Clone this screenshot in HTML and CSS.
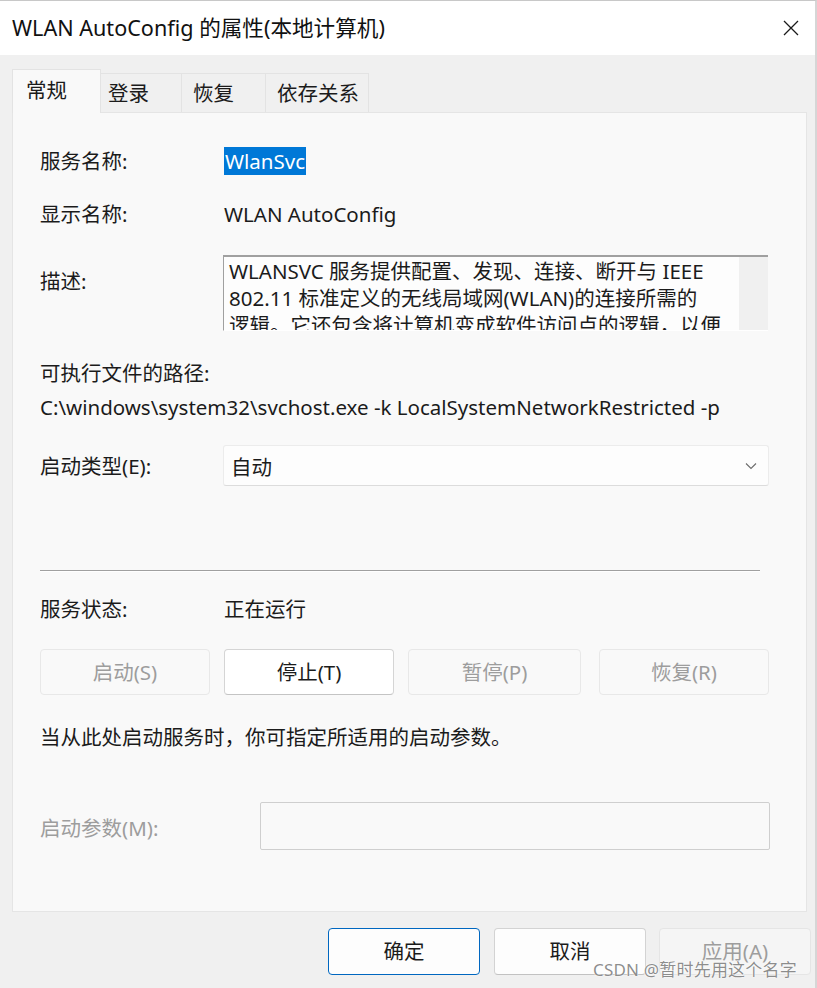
FILE: index.html
```html
<!DOCTYPE html>
<html lang="zh-CN">
<head>
<meta charset="utf-8">
<title>WLAN AutoConfig 的属性(本地计算机)</title>
<link rel="stylesheet" href="styles.css">
</head>
<body>
<div class="window">
  <div class="titlebar">
    <span class="title">WLAN AutoConfig 的属性(本地计算机)</span>
    <svg class="close" width="16" height="16" viewBox="0 0 16 16"><path d="M1 1 L15 15 M15 1 L1 15" stroke="#1a1a1a" stroke-width="1.3" fill="none"/></svg>
  </div>
  <div class="content">
    <div class="tabs">
      <div class="tab active">常规</div>
      <div class="tab t2">登录</div>
      <div class="tab t3">恢复</div>
      <div class="tab t4">依存关系</div>
    </div>
    <div class="panel">
      <div class="row r-name">
        <span class="label">服务名称:</span>
        <span class="value"><span class="selected">WlanSvc</span></span>
      </div>
      <div class="row r-display">
        <span class="label">显示名称:</span>
        <span class="value">WLAN AutoConfig</span>
      </div>
      <div class="row r-desc">
        <span class="label desc-label">描述:</span>
        <div class="descbox">
          <div class="desctext">WLANSVC 服务提供配置、发现、连接、断开与 IEEE<br>802.11 标准定义的无线局域网(WLAN)的连接所需的<br>逻辑。它还包含将计算机变成软件访问点的逻辑，以便</div>
          <div class="scrollbar"></div>
        </div>
      </div>
      <div class="line r-pathlabel">可执行文件的路径:</div>
      <div class="line r-path">C:\windows\system32\svchost.exe -k LocalSystemNetworkRestricted -p</div>
      <div class="row r-type">
        <span class="label">启动类型(E):</span>
        <div class="select">
          <span>自动</span>
          <svg class="chev" width="12" height="8" viewBox="0 0 12 8"><path d="M1 1.5 L6 6.5 L11 1.5" stroke="#6b6b6b" stroke-width="1.1" fill="none"/></svg>
        </div>
      </div>
      <div class="separator"></div>
      <div class="row r-status">
        <span class="label">服务状态:</span>
        <span class="value">正在运行</span>
      </div>
      <div class="btnrow">
        <div class="btn disabled b1">启动(S)</div>
        <div class="btn b2">停止(T)</div>
        <div class="btn disabled b3">暂停(P)</div>
        <div class="btn disabled b4">恢复(R)</div>
      </div>
      <div class="line r-hint">当从此处启动服务时，你可指定所适用的启动参数。</div>
      <div class="row r-param">
        <span class="label param-label">启动参数(M):</span>
        <div class="paraminput"></div>
      </div>
    </div>
    <div class="footer">
      <div class="fbtn default">确定</div>
      <div class="fbtn">取消</div>
      <div class="fbtn disabled">应用(A)</div>
    </div>
  </div>
  <div class="watermark">CSDN @暂时先用这个名字</div>
</div>
</body>
</html>
```
FILE: styles.css
```css
* { box-sizing: border-box; }
html, body { margin: 0; padding: 0; }
body {
  width: 817px;
  height: 988px;
  overflow: hidden;
  background: #f0f0f0;
  font-family: "Noto Sans", "Noto Sans CJK SC", sans-serif;
  font-size: 20.5px;
  color: #1b1b1b;
}
.window {
  position: relative;
  width: 817px;
  height: 988px;
  background: #f0f0f0;
  border-top: 1px solid #c8c8c8;
  border-right: 2px solid #d6d6d6;
}
.titlebar {
  height: 54px;
  background: #ffffff;
  display: flex;
  align-items: center;
  justify-content: space-between;
  padding: 0 16px 0 12px;
}
.title { font-size: 21.6px; line-height: 28px; color: #111; }
.close { display: block; }
.content { padding: 14px 0 0 12px; }
.tabs {
  display: flex;
  align-items: flex-end;
  height: 43px;
  position: relative;
  z-index: 1;
}
.tab {
  height: 39px;
  line-height: 38px;
  padding-left: 13px;
  background: #f0f0f0;
  border: 1px solid #e3e3e3;
  border-bottom: none;
  border-left: none;
}
.tab.active {
  width: 89px;
  height: 44px;
  line-height: 40px;
  background: #f9f9f9;
  border-left: 1px solid #e3e3e3;
  margin-bottom: -1px;
}
.t2 { width: 81px; padding-left: 7px; }
.t3 { width: 84px; padding-left: 11px; }
.t4 { width: 103px; padding-left: 11px; }
.panel {
  width: 795px;
  height: 800px;
  background: #f9f9f9;
  border: 1px solid #e5e5e5;
  padding: 34px 0 0 27px;
  display: flex;
  flex-direction: column;
}
.row { display: flex; align-items: center; }
.label { width: 184px; flex: none; line-height: 28px; }
.value { line-height: 28px; }
.line { line-height: 28px; }
.selected { background: #0078d7; color: #fff; padding: 0 1px; display: inline-block; line-height: 28px; }
.r-name { height: 28px; }
.r-display { height: 28px; margin-top: 25px; }
.r-desc { align-items: flex-start; margin-top: 27px; }
.desc-label { margin-top: 12px; }
.descbox {
  width: 545px;
  height: 76px;
  display: flex;
  background: #fff;
  border-top: 2px solid #a0a0a0;
  border-left: 1px solid #a0a0a0;
  border-bottom: 1px solid #ffffff;
  overflow: hidden;
  margin-left: -1px;
}
.desctext {
  width: 515px;
  flex: none;
  padding: 1px 0 0 5px;
  line-height: 27px;
  white-space: nowrap;
  background: #fdfdfd;
  overflow: hidden;
  height: 73px;
}
.scrollbar { flex: 1; background: #f0f0f0; }
.r-pathlabel { margin-top: 28px; }
.r-path { margin-top: 6px; }
.r-type { margin-top: 24px; }
.select {
  width: 546px;
  height: 41px;
  background: #fdfdfd;
  border: 1px solid #ececec;
  border-bottom-color: #dcdcdc;
  border-radius: 3px;
  display: flex;
  align-items: center;
  justify-content: space-between;
  padding: 0 11px 0 7px;
  margin-left: -1px;
}
.chev { display: block; }
.separator {
  width: 720px;
  height: 2px;
  margin-top: 84px;
  border-top: 1px solid #a0a0a0;
  border-bottom: 1px solid #ffffff;
}
.r-status { margin-top: 23px; }
.btnrow { display: flex; margin-top: 26px; }
.btn {
  height: 46px;
  line-height: 44px;
  text-align: center;
  background: #ffffff;
  border: 1px solid #d5d5d5;
  border-bottom-color: #c4c4c4;
  border-radius: 4px;
}
.btn.disabled {
  background: #f9f9f9;
  border: 1px solid #e8e8e8;
  color: #9d9d9d;
}
.b1 { width: 170px; }
.b2 { width: 170px; margin-left: 14px; }
.b3 { width: 173px; margin-left: 14px; }
.b4 { width: 170px; margin-left: 18px; }
.r-hint { margin-top: 28px; }
.r-param { margin-top: 51px; }
.param-label { width: 220px; color: #9d9d9d; margin-top: 4px; }
.paraminput {
  width: 510px;
  height: 48px;
  border: 1px solid #cfcfcf;
  background: #f9f9f9;
  border-radius: 2px;
}
.footer {
  display: flex;
  padding: 16px 0 0 316px;
}
.fbtn {
  width: 152px;
  height: 47px;
  line-height: 45px;
  text-align: center;
  background: #fdfdfd;
  border: 1px solid #d3d3d3;
  border-bottom-color: #c2c2c2;
  border-radius: 4px;
  margin-right: 14px;
}
.fbtn.default { border: 1px solid #0067c0; }
.fbtn.disabled {
  background: #f5f5f5;
  border: 1px solid #e5e5e5;
  color: #9d9d9d;
  margin-right: 0;
  margin-left: -1px;
}
.watermark {
  position: absolute;
  left: 593px;
  top: 957px;
  font-size: 17px;
  line-height: 24px;
  color: rgba(120, 120, 120, 0.85);
  text-shadow: 0 0 1px #fff, 0 0 2px #fff;
  letter-spacing: 0.2px;
}
```
